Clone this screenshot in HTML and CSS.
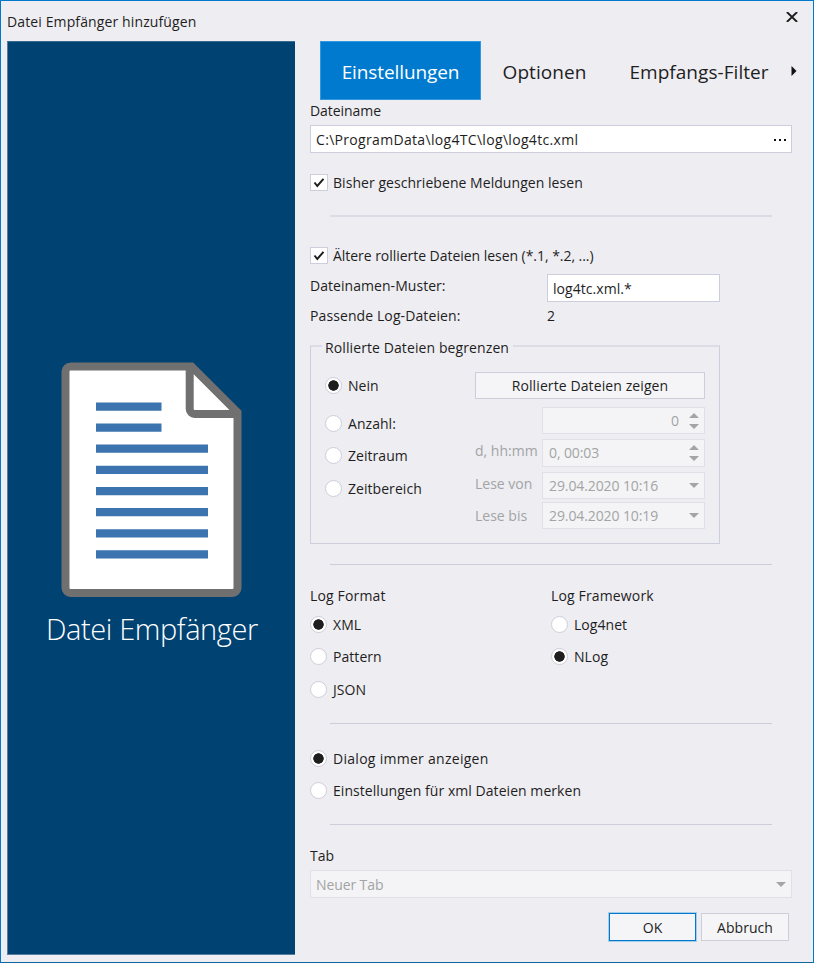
FILE: index.html
```html
<!DOCTYPE html>
<html lang="de">
<head>
<meta charset="utf-8">
<title>Datei Empfänger hinzufügen</title>
<link rel="stylesheet" href="styles.css">
</head>
<body>
<div class="window">
  <header class="titlebar">
    <h1 class="t-title">Datei Empfänger hinzufügen</h1>
    <svg class="close" width="12" height="10" viewBox="0 0 12 10"><path d="M.9 0 11.1 10M11.1 0 .9 10" stroke="#1e1e1e" stroke-width="1.9"/></svg>
  </header>
  <div class="body">
    <aside class="sidebar">
      <svg class="doc" width="182" height="236" viewBox="0 0 182 236">
        <path d="M9 4.5H130.500L176.500 50.500V226a5 5 0 0 1-5 5H9.500a5 5 0 0 1-5-5V9.500a5 5 0 0 1 5-5z" fill="#fff" stroke="#707070" stroke-width="8"/>
        <path d="M128.700 6V47a5 5 0 0 0 5 5H176" fill="none" stroke="#707070" stroke-width="8"/>
        <g fill="#3b74ae"><path d="M35 40.500h65.500v8.300h-65.500zM35 61.500h65.500v8.300h-65.500zM35 82.500h112v8.300h-112zM35 103.800h112v8.300h-112zM35 125h112v8.300h-112zM35 146h112v8.300h-112zM35 167.200h112v8.300h-112zM35 188.300h112v8.300h-112z"/></g>
      </svg>
      <div class="side-name">Datei Empfänger</div>
    </aside>
    <main class="content">
      <nav class="tabs">
        <div class="tab active"><span>Einstellungen</span></div>
        <div class="tab second"><span>Optionen</span></div>
        <div class="tab third"><span>Empfangs-Filter</span></div>
        <svg class="more" width="6" height="10" viewBox="0 0 6 10"><path d="M.5 0 5.500 5 .5 10z" fill="#111"/></svg>
      </nav>
      <div class="label file-label">Dateiname</div>
      <div class="field file"><span class="t-path">C:\ProgramData\log4TC\log\log4tc.xml</span><svg width="12" height="2"><path d="M0 0h2v2H0zM5 0h2v2H5zM10 0h2v2h-2z" fill="#111"/></svg></div>
      <div class="choice c1"><span class="check"><svg width="16" height="15" viewBox="0 0 16 15"><path d="M3.500 7.500 6.300 11 12.500 3.800" fill="none" stroke="#1e1e1e" stroke-width="2"/></svg></span><span class="t-prev">Bisher geschriebene Meldungen lesen</span></div>
      <div class="rule r1"></div>
      <div class="choice c2"><span class="check"><svg width="16" height="15" viewBox="0 0 16 15"><path d="M3.500 7.500 6.300 11 12.500 3.800" fill="none" stroke="#1e1e1e" stroke-width="2"/></svg></span><span class="t-older">Ältere rollierte Dateien lesen (*.1, *.2, ...)</span></div>
      <div class="pair pattern"><span class="label">Dateinamen-Muster:</span><div class="field"><span>log4tc.xml.*</span></div></div>
      <div class="pair matches"><span class="label">Passende Log-Dateien:</span><span>2</span></div>
      <section class="group">
        <div class="legend"><span class="t-legend">Rollierte Dateien begrenzen</span></div>
        <div class="group-body">
          <div class="limits">
            <div class="choice"><span class="radio on"></span><span>Nein</span></div>
            <div class="choice"><span class="radio"></span><span>Anzahl:</span></div>
            <div class="choice"><span class="radio"></span><span>Zeitraum</span></div>
            <div class="choice"><span class="radio"></span><span>Zeitbereich</span></div>
          </div>
          <div class="values">
            <div class="button show"><span class="t-show">Rollierte Dateien zeigen</span></div>
            <div class="value count"><span></span><div class="field off"><span>0</span><svg width="10" height="16"><path d="M0 5 5 0 10 5zM0 11h10l-5 5z" fill="#a2a4a5"/></svg></div></div>
            <div class="value span"><span>d, hh:mm</span><div class="field off"><span>0, 00:03</span><svg width="10" height="16"><path d="M0 5 5 0 10 5zM0 11h10l-5 5z" fill="#a2a4a5"/></svg></div></div>
            <div class="value from"><span>Lese von</span><div class="field off"><span>29.04.2020 10:16</span><svg width="10" height="5"><path d="M0 0h10L5 5z" fill="#a2a4a5"/></svg></div></div>
            <div class="value to"><span>Lese bis</span><div class="field off"><span>29.04.2020 10:19</span><svg width="10" height="5"><path d="M0 0h10L5 5z" fill="#a2a4a5"/></svg></div></div>
          </div>
        </div>
      </section>
      <div class="rule r2"></div>
      <div class="formats">
        <div class="column">
          <div class="label">Log Format</div>
          <div class="choice"><span class="radio on"></span><span>XML</span></div>
          <div class="choice"><span class="radio"></span><span>Pattern</span></div>
          <div class="choice"><span class="radio"></span><span>JSON</span></div>
        </div>
        <div class="column">
          <div class="label">Log Framework</div>
          <div class="choice"><span class="radio"></span><span>Log4net</span></div>
          <div class="choice"><span class="radio on"></span><span>NLog</span></div>
        </div>
      </div>
      <div class="rule r3"></div>
      <div class="remember">
        <div class="choice"><span class="radio on"></span><span class="t-dialog">Dialog immer anzeigen</span></div>
        <div class="choice"><span class="radio"></span><span class="t-remember">Einstellungen für xml Dateien merken</span></div>
      </div>
      <div class="rule r4"></div>
      <div class="label tab-label">Tab</div>
      <div class="field off tab-select"><span>Neuer Tab</span><svg width="10" height="5"><path d="M0 0h10L5 5z" fill="#a2a4a5"/></svg></div>
      <footer class="actions">
        <div class="button primary"><span>OK</span></div>
        <div class="button"><span>Abbruch</span></div>
      </footer>
    </main>
  </div>
</div>
</body>
</html>
```
FILE: styles.css
```css
* { box-sizing: border-box; }
body {
  margin: 0;
  background: #eeedf2;
  color: #1e1e1e;
  font: 14px/20px "Open Sans", "Noto Sans", sans-serif;
  letter-spacing: 0.05px;
  white-space: nowrap;
}
svg { display: block; flex: none; }
.window { width: 814px; height: 963px; border: 1px solid #0079cd; border-bottom-color: #0e659f; }
.titlebar { height: 40px; padding: 10px 15px 0 6px; display: flex; justify-content: space-between; }
h1 { margin: 1px 0 0; font-size: 14px; line-height: 20px; font-weight: 400; letter-spacing: 0.12px; }
.close { margin-top: 1px; }
.body { display: flex; padding-left: 6px; }
.sidebar { width: 288px; height: 914px; background: #004271; border: 1px solid #557f9e; border-top-color: #366b91; border-right: 0; padding: 320px 0 0 53px; color: #fff; }
.side-name { margin: 10px 0 0 -15px; font-size: 29px; line-height: 42px; font-weight: 300; letter-spacing: -0.4px; }
.content { width: 482px; margin-left: 15px; }
.tabs { height: 59px; margin-left: 10px; display: flex; font-size: 19px; }
.tab { display: flex; flex: none; align-items: center; justify-content: center; height: 59px; padding-top: 3px; }
.active { width: 161px; color: #fff; background: #007acf; border: 1px solid #3398dd; letter-spacing: -0.1px; }
.second { width: 127px; }
.third { width: 182px; }
.more { margin: 25px 0 0 1px; }
.label { height: 20px; }
.file-label { margin-top: 1px; letter-spacing: -0.05px; }
.field { height: 28px; display: flex; align-items: center; justify-content: space-between; background: #fff; border: 1px solid #cccedb; padding: 2px 5px 0; }
.field svg { margin-top: -2px; }
.file { margin-top: 4px; }
.file svg { margin-top: 0; }
.t-path { letter-spacing: 0.32px; }
.t-older { letter-spacing: -0.04px; }
.t-show, .t-legend { letter-spacing: 0.1px; }
.t-dialog { letter-spacing: 0.28px; }
.choice { height: 18px; display: flex; align-items: center; gap: 6px; }
.choice > span:last-child { padding-top: 1px; }
.check { width: 18px; height: 17px; border: 1px solid #cccedb; background: #fff; margin-right: -1px; flex: none; }
.c1 { margin-top: 20px; }
.rule { width: 442px; height: 1px; margin-left: 20px; background: #cccedb; }
.r1 { height: 2px; margin-top: 24px; background: #dcdbe6; }
.c2 { margin-top: 29px; }
.pair { display: grid; grid-template-columns: 237px 173px; }
.pattern { margin-top: 10px; height: 28px; }
.pattern .label { margin-top: 2px; }
.matches { margin-top: 4px; height: 20px; }
.matches .label { letter-spacing: 0.1px; }
.group { width: 410px; height: 199px; margin-top: 19px; border: 1px solid #cccedb; border-top: 2px solid #dcdbe6; }
.legend { height: 20px; margin: -10px 0 0 11px; display: flex; }
.legend span { height: 20px; padding: 1px 4px 0 3px; background: #eeedf2; }
.group-body { display: flex; padding-left: 14px; }
.limits { width: 150px; padding-top: 19px; }
.limits .choice { margin-bottom: 14.500px; }
.limits .choice:first-child { margin-bottom: 20px; }
.values { width: 230px; padding-top: 15px; }
.button { display: flex; align-items: center; justify-content: center; background: #f5f5f7; border: 1px solid #cccedb; padding-top: 1px; }
.show { height: 27px; }
.value { display: grid; grid-template-columns: 67px 163px; height: 27px; color: #a2a4a5; letter-spacing: -0.1px; }
.value > span { padding-top: 2px; letter-spacing: 0; }
.value .field { height: 27px; }
.off { background: #f4f4f6; border-color: #e0e0e8; color: #a2a4a5; padding-left: 6px; }
.value .off { padding-top: 0; }
.value .off svg { margin-top: 0; }
.count { margin-top: 8px; }
.count .field { justify-content: flex-end; gap: 10px; }
.span { height: 28px; margin-top: 5px; }
.span .field { height: 28px; }
.from { margin-top: 5px; }
.to { margin-top: 3px; }
.to > span { padding-top: 4px; }
.r2 { margin-top: 20px; }
.formats { display: flex; margin-top: 21px; height: 113px; }
.column { width: 241px; }
.column .choice { margin-bottom: 14.500px; }
.column .label { margin-bottom: 9px; letter-spacing: 0.15px; }
.r3 { margin-top: 24px; }
.remember { margin-top: 25px; height: 50px; }
.remember .choice { margin-bottom: 14px; }
.r4 { margin-top: 25px; }
.tab-label { margin-top: 21px; }
.tab-select { margin-top: 4px; padding-left: 5px; letter-spacing: -0.1px; }
.radio { width: 17px; height: 17px; border: 1px solid #cccedb; border-radius: 50%; background: #fff; flex: none; }
.on { background: radial-gradient(circle, #1e1e1e 0 4.900px, #fff 5.500px); }
.actions { display: flex; justify-content: flex-end; gap: 5px; margin: 15px 3px 0 0; }
.actions .button { width: 88px; height: 28px; }
.actions .primary { width: 87px; border-color: #0079cd; outline: 1px solid #a6cde9; outline-offset: 0; }
```
